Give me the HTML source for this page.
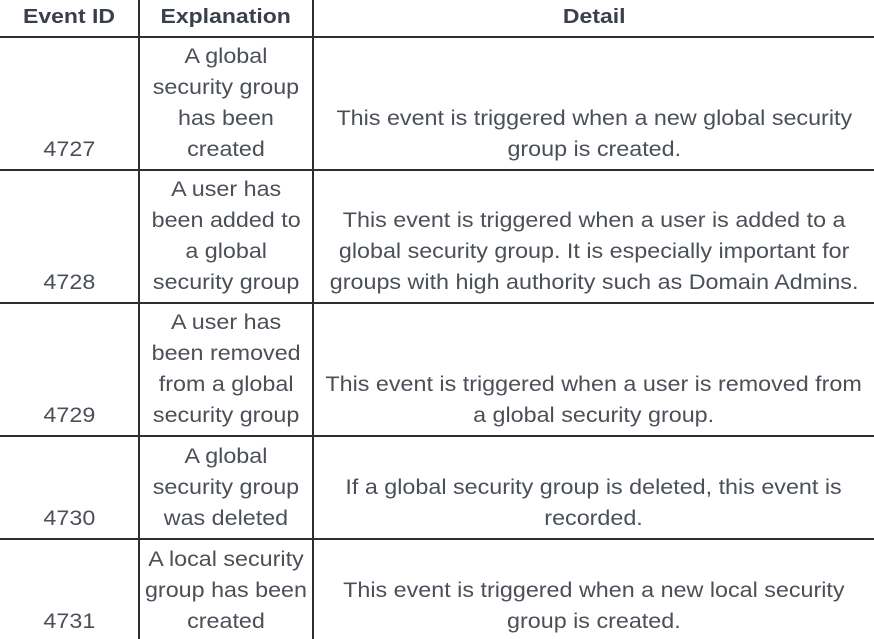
<!DOCTYPE html>
<html><head><meta charset="utf-8"><style>
html,body{margin:0;padding:0;background:#fff;width:874px;height:639px;overflow:hidden}
body{position:relative;font-family:"Liberation Sans",Arial,sans-serif;font-size:21px;color:#4b5058}
.h{position:absolute;background:#2e2e2e;height:2px;left:0;width:874px}
.v{position:absolute;background:#2e2e2e;width:2px;top:0;height:639px}
.c{position:absolute;display:flex;flex-direction:column;justify-content:flex-end;align-items:center;text-align:center;line-height:31px;padding-bottom:4px;box-sizing:border-box;white-space:nowrap}
.c span{display:block;transform:scaleX(1.11);transform-origin:center}
.hd{position:absolute;top:0;height:37px;line-height:35px;text-align:center;font-weight:bold;color:#3a404b;font-size:20px;white-space:nowrap}
.hd span{display:inline-block;transform:scaleX(1.15)}
</style></head><body>
<div class="v" style="left:138px"></div>
<div class="v" style="left:312px"></div>
<div class="h" style="top:36px"></div>
<div class="h" style="top:169px"></div>
<div class="h" style="top:302px"></div>
<div class="h" style="top:435px"></div>
<div class="h" style="top:538px"></div>

<div class="hd" style="left:0;width:138px"><span>Event ID</span></div>
<div class="hd" style="left:140px;width:172px"><span>Explanation</span></div>
<div class="hd" style="left:314px;width:560px"><span>Detail</span></div>

<div class="c" style="left:0;width:138px;top:38px;height:131px"><span>4727</span></div>
<div class="c" style="left:140px;width:172px;top:38px;height:131px"><span>A global<br>security group<br>has been<br>created</span></div>
<div class="c" style="left:314px;width:560px;top:38px;height:131px"><span>This event is triggered when a new global security<br>group is created.</span></div>

<div class="c" style="left:0;width:138px;top:171px;height:131px"><span>4728</span></div>
<div class="c" style="left:140px;width:172px;top:171px;height:131px"><span>A user has<br>been added to<br>a global<br>security group</span></div>
<div class="c" style="left:314px;width:560px;top:171px;height:131px"><span>This event is triggered when a user is added to a<br>global security group. It is especially important for<br>groups with high authority such as Domain Admins.</span></div>

<div class="c" style="left:0;width:138px;top:304px;height:131px"><span>4729</span></div>
<div class="c" style="left:140px;width:172px;top:304px;height:131px"><span>A user has<br>been removed<br>from a global<br>security group</span></div>
<div class="c" style="left:314px;width:560px;top:304px;height:131px"><span>This event is triggered when a user is removed from<br>a global security group.</span></div>

<div class="c" style="left:0;width:138px;top:437px;height:101px"><span>4730</span></div>
<div class="c" style="left:140px;width:172px;top:437px;height:101px"><span>A global<br>security group<br>was deleted</span></div>
<div class="c" style="left:314px;width:560px;top:437px;height:101px"><span>If a global security group is deleted, this event is<br>recorded.</span></div>

<div class="c" style="left:0;width:138px;top:540px;height:101px"><span>4731</span></div>
<div class="c" style="left:140px;width:172px;top:540px;height:101px"><span>A local security<br>group has been<br>created</span></div>
<div class="c" style="left:314px;width:560px;top:540px;height:101px"><span>This event is triggered when a new local security<br>group is created.</span></div>
</body></html>
